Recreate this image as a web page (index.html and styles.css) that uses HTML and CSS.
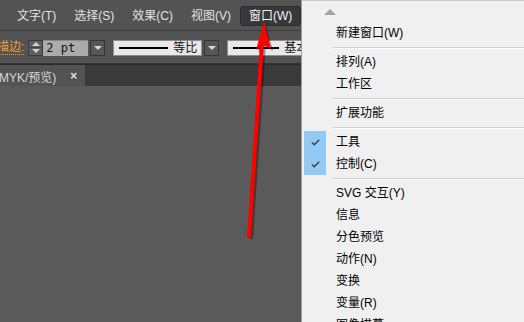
FILE: index.html
```html
<!DOCTYPE html>
<html lang="zh-CN">
<head>
<meta charset="utf-8">
<title>Illustrator 窗口菜单</title>
<link rel="stylesheet" href="styles.css">
</head>
<body>
<div class="app">
  <div class="menubar">
    <span class="mitem">文字(T)</span>
    <span class="mitem">选择(S)</span>
    <span class="mitem">效果(C)</span>
    <span class="mitem">视图(V)</span>
    <span class="mitem active">窗口(W)</span>
  </div>
  <div class="toolbar">
    <span class="label">描边:</span>
    <span class="spin">
      <span class="spin-up"></span>
      <span class="spin-down"></span>
    </span>
    <span class="field">2 pt</span>
    <span class="ddbtn"><span class="tri"></span></span>
    <span class="stroke s1"><span class="sline"></span><span class="stext">等比</span></span>
    <span class="ddbtn"><span class="tri"></span></span>
    <span class="stroke s2"><span class="sline"></span><span class="stext">基本</span></span>
  </div>
  <div class="tabrow">
    <div class="tab"><span class="tabtext">MYK/预览)</span><span class="tabclose">×</span></div>
  </div>
  <div class="canvas"></div>
</div>

<div class="popup">
  <div class="scrollup"><span class="uptri"></span></div>
  <div class="pitem"><span class="chk"></span><span class="lbl">新建窗口(W)</span></div>
  <div class="sep"></div>
  <div class="pitem"><span class="chk"></span><span class="lbl">排列(A)</span></div>
  <div class="pitem"><span class="chk"></span><span class="lbl">工作区</span></div>
  <div class="sep"></div>
  <div class="pitem"><span class="chk"></span><span class="lbl">扩展功能</span></div>
  <div class="sep"></div>
  <div class="pitem"><span class="chk on"><svg width="9" height="7" viewBox="0 0 9 7"><polyline points="0.8,3.4 3.2,5.8 8.2,0.8" fill="none" stroke="#3a3a3a" stroke-width="1.3"/></svg></span><span class="lbl">工具</span></div>
  <div class="pitem"><span class="chk on"><svg width="9" height="7" viewBox="0 0 9 7"><polyline points="0.8,3.4 3.2,5.8 8.2,0.8" fill="none" stroke="#3a3a3a" stroke-width="1.3"/></svg></span><span class="lbl">控制(C)</span></div>
  <div class="sep"></div>
  <div class="pitem"><span class="chk"></span><span class="lbl">SVG 交互(Y)</span></div>
  <div class="pitem"><span class="chk"></span><span class="lbl">信息</span></div>
  <div class="pitem"><span class="chk"></span><span class="lbl">分色预览</span></div>
  <div class="pitem"><span class="chk"></span><span class="lbl">动作(N)</span></div>
  <div class="pitem"><span class="chk"></span><span class="lbl">变换</span></div>
  <div class="pitem"><span class="chk"></span><span class="lbl">变量(R)</span></div>
  <div class="pitem"><span class="chk"></span><span class="lbl">图像描摹</span></div>
</div>

<svg class="arrow" width="524" height="322" viewBox="0 0 524 322">
  <g fill="rgba(0,0,0,0.35)" stroke="rgba(0,0,0,0.35)">
    <line x1="251" y1="239" x2="264" y2="44" stroke-width="4"/>
    <polygon points="266,25 258,52 265,46 273,51" stroke="none"/>
  </g>
  <g fill="#ff0000" stroke="#ff0000">
    <line x1="249" y1="238" x2="262" y2="43" stroke-width="4"/>
    <polygon points="264,22 256,50 263,44 271,49" stroke="none"/>
  </g>
</svg>
</body>
</html>
```

FILE: styles.css
```css
html, body {
  margin: 0;
  padding: 0;
}
body {
  width: 524px;
  height: 322px;
  overflow: hidden;
  position: relative;
  background: #5a5a5a;
  font-family: "Liberation Sans", "Noto Sans CJK SC", sans-serif;
  font-size: 12px;
}
.app {
  display: flex;
  flex-direction: column;
  height: 322px;
}
.menubar {
  height: 31px;
  box-sizing: border-box;
  background: #535353;
  border-bottom: 1px solid #3a3a3a;
  display: flex;
  align-items: center;
  padding: 2px 0 0 8px;
  color: #e2e2e2;
}
.mitem {
  padding: 0 9px;
  line-height: 20px;
  white-space: nowrap;
}
.mitem.active {
  margin-left: 0;
  padding: 0 8px;
  background: #383838;
  border: 1px solid #2c2c2c;
  border-radius: 3px;
  line-height: 18px;
  color: #eef2f8;
}
.toolbar {
  height: 33px;
  box-sizing: border-box;
  background: #535353;
  border-bottom: 1px solid #333333;
  display: flex;
  align-items: center;
  padding-top: 1px;
}
.label {
  margin-left: -3px;
  color: #f2a02e;
  border-bottom: 1px dotted #f2a02e;
  line-height: 14px;
  white-space: nowrap;
}
.spin {
  margin-left: 4px;
  width: 15px;
  height: 16px;
  box-sizing: border-box;
  border: 1px solid #3a3a3a;
  background: #5e5e5e;
  display: flex;
  flex-direction: column;
}
.spin-up, .spin-down {
  flex: 1;
  display: flex;
  align-items: center;
  justify-content: center;
}
.spin-up {
  border-bottom: 1px solid #444;
}
.spin-up::before {
  content: "";
  border-left: 4px solid transparent;
  border-right: 4px solid transparent;
  border-bottom: 4px solid #d0d0d0;
}
.spin-down::before {
  content: "";
  border-left: 4px solid transparent;
  border-right: 4px solid transparent;
  border-top: 4px solid #d0d0d0;
}
.field {
  width: 45px;
  height: 16px;
  box-sizing: border-box;
  background: #ababab;
  border-top: 1px solid #8a8a8a;
  color: #141414;
  font-family: "DejaVu Sans Mono", "Liberation Mono", monospace;
  font-size: 12px;
  line-height: 15px;
  padding-left: 3px;
  white-space: pre;
}
.ddbtn {
  margin-left: 2px;
  width: 15px;
  height: 16px;
  box-sizing: border-box;
  border: 1px solid #363636;
  background: #565656;
  display: flex;
  align-items: center;
  justify-content: center;
}
.tri {
  border-left: 4px solid transparent;
  border-right: 4px solid transparent;
  border-top: 4px solid #d8d8d8;
}
.stroke {
  height: 16px;
  box-sizing: border-box;
  background: #e8e8e8;
  border: 1px solid #8c8c8c;
  display: flex;
  align-items: center;
  color: #111;
  white-space: nowrap;
  overflow: hidden;
}
.s1 {
  margin-left: 8px;
  width: 89px;
}
.s2 {
  margin-left: 8px;
  width: 90px;
}
.sline {
  margin-left: 5px;
  width: 49px;
  height: 2px;
  background: #000;
}
.s2 .sline {
  width: 46px;
}
.stext {
  margin-left: 5px;
  line-height: 14px;
}
.tabrow {
  height: 22px;
  box-sizing: border-box;
  background: #3a3a3a;
  border-top: 1px solid #2a2a2a;
  display: flex;
}
.tab {
  width: 85px;
  background: #535353;
  display: flex;
  align-items: center;
  color: #d6d6d6;
  white-space: nowrap;
}
.tabtext {
  margin-left: -1px;
  padding-top: 1px;
}
.tabclose {
  margin-left: 14px;
  font-size: 12px;
  font-weight: bold;
  color: #e0e0e0;
  line-height: 12px;
}
.canvas {
  flex: 1;
  background: #5a5a5a;
}

/* popup menu (overlay) */
.popup {
  position: absolute;
  left: 301px;
  top: 0;
  width: 223px;
  height: 322px;
  box-sizing: border-box;
  background: #f0f0f0;
  border-left: 1px solid #9c9c9c;
  border-top: 1px solid #c8c8c8;
  display: flex;
  flex-direction: column;
  color: #000;
  overflow: hidden;
}
.scrollup {
  height: 21px;
  flex: none;
  display: flex;
  align-items: center;
  padding-left: 22px;
}
.uptri {
  border-left: 6px solid transparent;
  border-right: 6px solid transparent;
  border-bottom: 6px solid #a2a2a2;
}
.pitem {
  height: 22px;
  flex: none;
  display: flex;
  align-items: center;
}
.chk {
  margin-left: 2px;
  width: 22px;
  height: 22px;
  display: flex;
  align-items: center;
  justify-content: center;
}
.chk.on {
  background: #92c9f5;
}
.chk svg {
  margin-left: 1px;
}
.lbl {
  padding-left: 10px;
  line-height: 22px;
  white-space: nowrap;
}
.sep {
  height: 7px;
  flex: none;
  margin-left: 30px;
  box-sizing: border-box;
  padding-top: 3px;
}
.sep::before {
  content: "";
  display: block;
  height: 1px;
  background: #d2d2d2;
  border-bottom: 1px solid #fbfbfb;
}
.arrow {
  position: absolute;
  left: 0;
  top: 0;
  pointer-events: none;
}
```
